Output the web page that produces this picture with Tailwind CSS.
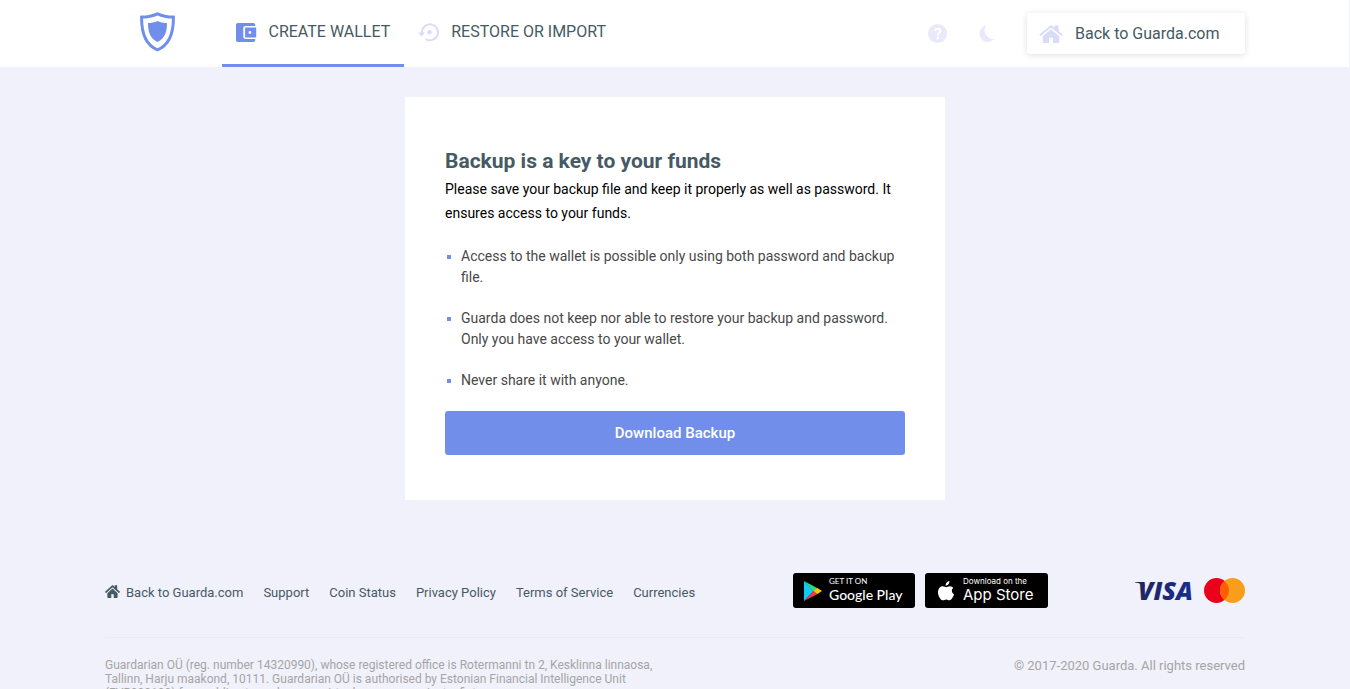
<!DOCTYPE html>
<html lang="en">
<head>
    <meta charset="UTF-8">
    <meta name="viewport" content="width=device-width, initial-scale=1.0">
    <title>Guarda Wallet - Backup</title>
    <script src="https://cdn.jsdelivr.net/npm/@tailwindcss/browser@4"></script>
</head>
<body class="bg-[#f1f1fb] font-[Roboto,sans-serif] text-[#455a64]">

    <div class="h-screen overflow-hidden">
        <header class="bg-white border-r border-[#f1f1fb]">
            <div class="max-w-[1140px] mx-auto h-[67px] flex justify-between">
                <div class="flex">
                    <a href="#" aria-label="Guarda" class="pl-[35px] pr-[47px] pt-3">
                        <svg class="w-[35px] h-10" viewBox="0 0 35 40" fill="none">
                            <path d="M17.5 1.8C12 4.3 7 5 1.6 5.1C1.4 20 4.5 32.5 17.5 37.8C30.5 32.5 33.6 20 33.4 5.1C28 5 23 4.3 17.5 1.8Z" stroke="#718fea" stroke-width="3"/>
                            <path d="M17.5 9C14.5 10.4 11.5 11 8 11.1C8 20 10 26.8 17.5 30C25 26.8 27 20 27 11.1C23.5 11 20.5 10.4 17.5 9Z" fill="#718fea"/>
                        </svg>
                    </a>
                    <nav class="flex">
                        <a href="#" class="flex items-center gap-3 px-3.5 border-b-3 border-[#718fea]">
                            <svg class="w-[21px] h-[19px]" viewBox="0 0 21 19">
                                <path d="M2 0H17.5C18.8 0 19.3 1 19.3 3H9.7C8.3 3 7.3 3.8 7.3 5.2V13.8C7.3 15.2 8.3 16 9.7 16H19.3C19.3 18 18.8 19 17.5 19H2C.7 19 0 18.3 0 17V2C0 .7.7 0 2 0Z" fill="#718fea"/>
                                <path fill-rule="evenodd" d="M9.1 4.6H20.2V14.4H9.1ZM13.9 8.1A1.4 1.4 0 1 0 13.9 10.9A1.4 1.4 0 1 0 13.9 8.1Z" fill="#718fea"/>
                            </svg>
                            CREATE WALLET
                        </a>
                        <a href="#" class="flex items-center gap-3 px-3.5 border-b-3 border-transparent">
                            <svg class="w-[21px] h-[19px]" viewBox="0 0 21 19" fill="none">
                                <path d="M4 10A8 8 0 1 1 7.6 16" stroke="#d9dcf6" stroke-width="2"/>
                                <path d="M0 9.6H7L3.5 13.6Z" fill="#d9dcf6"/>
                                <circle cx="11.5" cy="9.3" r="2.2" fill="#d9dcf6"/>
                            </svg>
                            RESTORE OR IMPORT
                        </a>
                    </nav>
                </div>
                <div class="flex items-center">
                    <button type="button" aria-label="Help" class="mr-8">
                        <svg class="w-[19px] h-[19px]" viewBox="0 0 19 19" fill="none">
                            <circle cx="9.5" cy="9.5" r="9.5" fill="#e8e9fa"/>
                            <path d="M6.7 7C6.9 5.5 8 4.7 9.6 4.7C11.2 4.7 12.4 5.6 12.4 7C12.4 9 9.7 8.9 9.7 11.4" stroke="#fff" stroke-width="2"/>
                            <circle cx="9.7" cy="14" r="1.3" fill="#fff"/>
                        </svg>
                    </button>
                    <button type="button" aria-label="Dark mode" class="mr-8">
                        <svg class="w-4 h-[17px]" viewBox="0 0 16 17">
                            <path d="M7.2 0A9 9 0 0 0 15.5 14A8.7 8.7 0 0 1 9 17C4 17 .5 13.2 .5 8.7C.5 4.5 3.2 1.2 7.2 0Z" fill="#e8e9fa"/>
                        </svg>
                    </button>
                    <a href="#" class="flex items-center gap-3 h-[41px] pl-3 pr-[25px] rounded-[3px] bg-white shadow-[0_1px_6px_rgba(0,0,0,0.13)]">
                        <svg class="w-6 h-[18px]" viewBox="0 0 24 18" fill="#d9dcf6">
                            <path d="M0.3 9.5L12 0L15.5 2.8V0.5H19.5V6L23.7 9.5L22.5 11L12 2.6L1.5 11Z"/>
                            <path d="M3.8 11L12 4.4L20.2 11V17C20.2 17.7 19.8 18 19.2 18H14V12.7H10V18H4.8C4.2 18 3.8 17.7 3.8 17Z"/>
                        </svg>
                        Back to Guarda.com
                    </a>
                </div>
            </div>
        </header>

        <main class="max-w-[540px] mx-auto mt-[30px] bg-white px-10 pt-[50px] pb-[45px]">
            <h1 class="text-[21px] leading-[28px] font-bold">Backup is a key to your funds</h1>
            <p class="mt-0.5 text-sm leading-6 text-black">Please save your backup file and keep it properly as well as password. It ensures access to your funds.</p>
            <ul class="mt-[21px] space-y-5 text-sm leading-[21px] text-[#484848]">
                <li class="flex gap-2.5 pl-0.5"><span class="mt-[9px] size-1 shrink-0 bg-[#718fea]"></span>Access to the wallet is possible only using both password and backup file.</li>
                <li class="flex gap-2.5 pl-0.5"><span class="mt-[9px] size-1 shrink-0 bg-[#718fea]"></span>Guarda does not keep nor able to restore your backup and password. Only you have access to your wallet.</li>
                <li class="flex gap-2.5 pl-0.5"><span class="mt-[9px] size-1 shrink-0 bg-[#718fea]"></span>Never share it with anyone.</li>
            </ul>
            <button type="button" class="mt-5 w-full h-11 rounded-[3px] bg-[#718fea] text-white text-[15px] font-medium">Download Backup</button>
        </main>

        <footer class="max-w-[1140px] mx-auto mt-[73px]">
            <div class="flex items-start justify-between pb-[29px] border-b border-[#ebebef]">
                <nav class="flex gap-5 pt-[10px] text-[13px] leading-5">
                    <a href="#" class="flex gap-1.5">
                        <svg class="mt-0.5 w-[15px] h-[13px]" viewBox="0 0 24 18" preserveAspectRatio="none" fill="#455a64">
                            <path d="M0 9.5L12 0L15.5 2.8V0.5H19.5V6L24 9.5L22.5 11.5L12 3.2L1.5 11.5Z"/>
                            <path d="M3.8 11.3L12 4.7L20.2 11.3V17C20.2 17.7 19.8 18 19.2 18H14V12.7H10V18H4.8C4.2 18 3.8 17.7 3.8 17Z"/>
                        </svg>
                        Back to Guarda.com
                    </a>
                    <a href="#">Support</a>
                    <a href="#">Coin Status</a>
                    <a href="#">Privacy Policy</a>
                    <a href="#">Terms of Service</a>
                    <a href="#">Currencies</a>
                </nav>
                <div class="flex">
                    <a href="#" class="mr-[10px] flex items-center w-[122px] h-[35px] pl-[11px] gap-[7px] rounded-[3px] bg-black text-white whitespace-nowrap">
                        <svg class="w-[18px] h-5 shrink-0" viewBox="0 0 18 20">
                            <path d="M0 0V20L9.5 10Z" fill="#12c9f4"/>
                            <path d="M0 0L13 7L9.5 10.5Z" fill="#2bdc82"/>
                            <path d="M13 6.8L18 10L13 13.2L9.5 10Z" fill="#ffc800"/>
                            <path d="M0 20L9.5 10L13 13.2Z" fill="#f2384e"/>
                        </svg>
                        <span class="flex flex-col font-[Lato,sans-serif]">
                            <span class="text-[8px] leading-[8px]">GET IT ON</span>
                            <span class="text-[14px] leading-[19px] font-medium">Google Play</span>
                        </span>
                    </a>
                    <a href="#" class="mr-[87px] flex items-center w-[123px] h-[35px] pl-3 gap-2 rounded-[3px] bg-black text-white whitespace-nowrap">
                        <svg class="w-[18px] h-5 shrink-0" viewBox="0 0 18 20" fill="#fff">
                            <path d="M12.4 0C12.6 2.3 10.8 4.6 8.7 4.6C8.4 2.5 10.4 .3 12.4 0Z"/>
                            <path d="M16.3 7.1C14.3 8.5 14.3 11.9 17 13.2C16.3 15.5 14.6 19 12.7 19.3C11.3 19.5 10.9 18.5 9.2 18.5C7.4 18.5 7 19.6 5.5 19.3C3 18.7 .8 14.2 1 11C1.2 7.7 3.2 5.3 5.7 5.3C7.2 5.3 8.3 6.2 9.2 6.2C10.2 6.2 11.3 5.2 13 5.3C14.4 5.4 15.6 6.1 16.3 7.1Z"/>
                        </svg>
                        <span class="flex flex-col font-[Inter,sans-serif]">
                            <span class="text-[8px] leading-[8px]">Download on the</span>
                            <span class="text-[15px] leading-[19px]">App Store</span>
                        </span>
                    </a>
                    <div class="flex items-center gap-3 h-[35px]">
                        <svg class="w-[57px] h-5 overflow-visible" viewBox="0 0 57 20">
                            <defs>
                                <linearGradient id="visa" gradientUnits="userSpaceOnUse" x1="0" y1="0" x2="57" y2="0">
                                    <stop offset="0" stop-color="#20255b"/>
                                    <stop offset="1" stop-color="#172f91"/>
                                </linearGradient>
                            </defs>
                            <path d="M0 1H9L10 6C7 3 4 1.8 0 1.4Z" fill="url(#visa)"/>
                            <text x="3" y="19" font-family="Open Sans, sans-serif" font-size="25" font-weight="800" font-style="italic" fill="url(#visa)">VISA</text>
                        </svg>
                        <svg class="w-[41px] h-[25px]" viewBox="0 0 41 25">
                            <circle cx="12.5" cy="12.5" r="12.5" fill="#eb001b"/>
                            <circle cx="28.5" cy="12.5" r="12.5" fill="#f79e1b"/>
                            <path d="M20.5 2.9A12.5 12.5 0 0 1 20.5 22.1A12.5 12.5 0 0 1 20.5 2.9Z" fill="#ff5f00"/>
                        </svg>
                    </div>
                </div>
            </div>
            <div class="flex justify-between pt-5 text-[#a5a5a5]">
                <p class="w-[560px] text-xs leading-[14px]">Guardarian OÜ (reg. number 14320990), whose registered office is Rotermanni tn 2, Kesklinna linnaosa, Tallinn, Harju maakond, 10111. Guardarian OÜ is authorised by Estonian Financial Intelligence Unit (FVR000100) for enabling to exchange a virtual currency against a fiat currency</p>
                <p class="text-[13px] leading-4">© 2017-2020 Guarda. All rights reserved</p>
            </div>
        </footer>
    </div>

</body>
</html>
